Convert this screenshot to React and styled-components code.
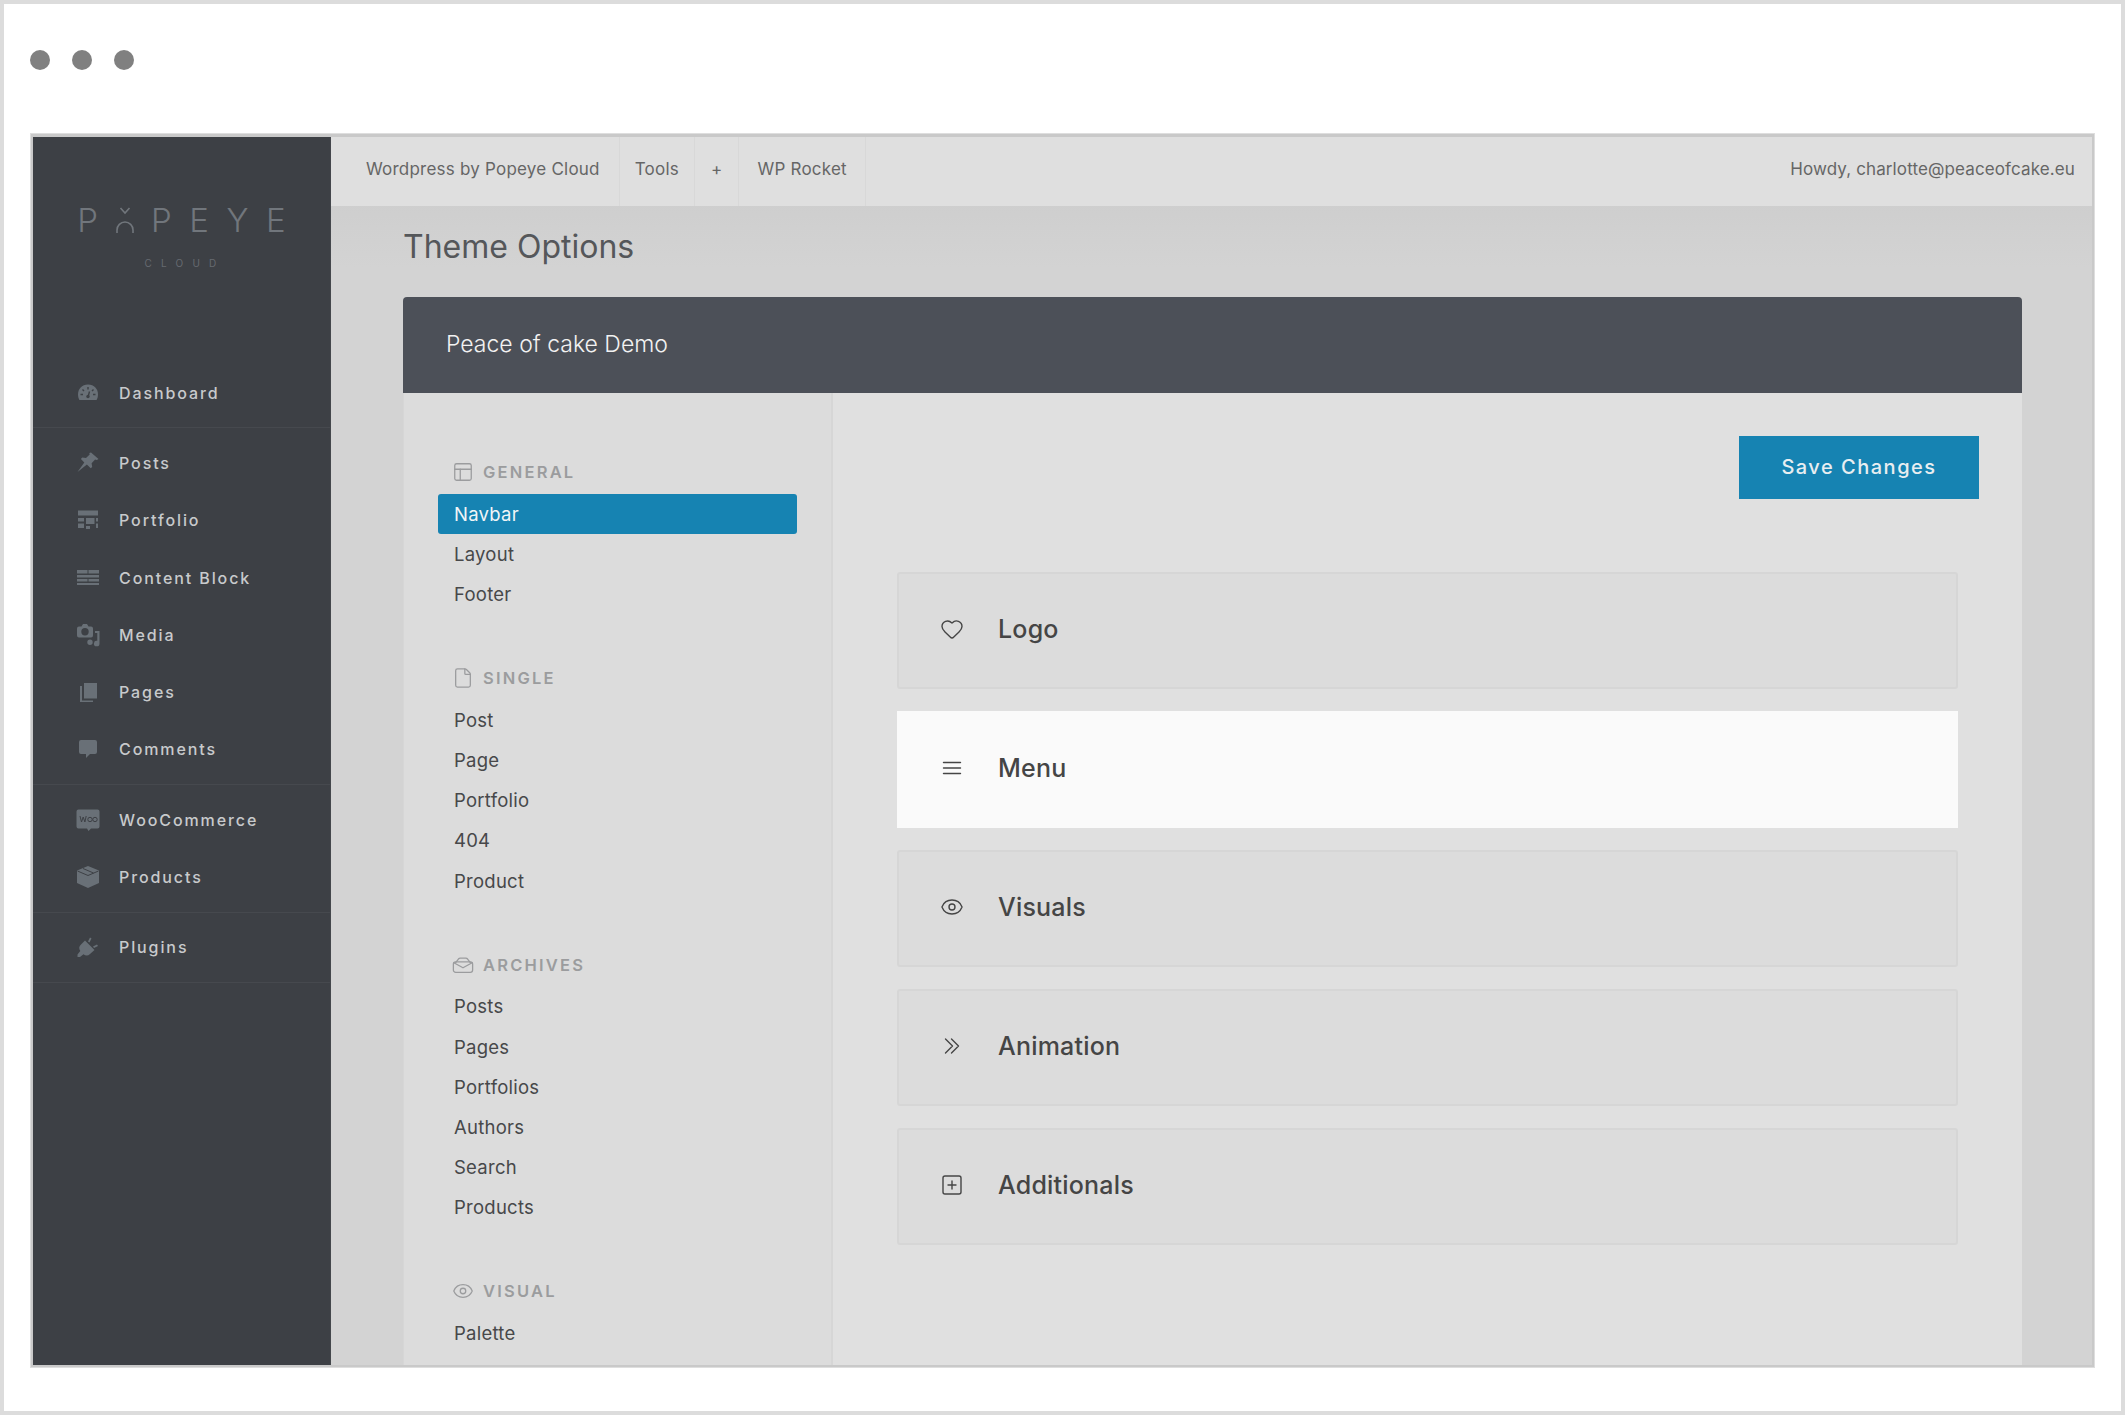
import { createGlobalStyle } from 'styled-components'
import styled from 'styled-components'
import { Heart, Eye, SquarePlus, PanelsTopLeft, File } from 'lucide-react'

const GlobalStyle = createGlobalStyle`
  * { box-sizing: border-box; }
  html, body { margin: 0; padding: 0; background: #fff; }
  body { font-family: Inter, "Open Sans", sans-serif; -webkit-font-smoothing: antialiased; }
`

const Frame = styled.div`
  width: 2125px;
  height: 1415px;
  border: 4px solid #dcdcdc;
  background: #fff;
  overflow: hidden;
`
const Dots = styled.div`
  display: flex;
  gap: 22px;
  height: 130px;
  padding: 46px 0 0 26px;
`
const Dot = styled.span`
  width: 20px;
  height: 20px;
  border-radius: 50%;
  background: #808080;
`
const Window = styled.div`
  display: flex;
  width: 2063px;
  height: 1233px;
  margin-left: 27px;
  border: 2px solid #c9c9c9;
  border-top-width: 3px;
  box-shadow: 0 0 0 1px #dedede;
  overflow: hidden;
`
const Sidebar = styled.aside`
  flex: 0 0 298px;
  background: #3d4045;
  border-right: 1px solid #44474c;
`
const Brand = styled.div`
  height: 221px;
  padding-top: 65px;
  display: flex;
  flex-direction: column;
  align-items: center;
`
const BrandName = styled.div`
  display: flex;
  align-items: center;
  gap: 17.5px;
  height: 36px;
  font-size: 33px;
  font-weight: 300;
  line-height: 36px;
  color: #71767c;
`
const BrandSub = styled.div`
  margin-top: 19px;
  font-size: 10px;
  line-height: 12px;
  letter-spacing: 9.2px;
  color: #666a70;
  margin-left: 7px;
`
const NavGroup = styled.div`
  padding: 6px 0;
  border-bottom: 1px solid #46494e;
`
const NavItem = styled.div`
  display: flex;
  align-items: center;
  height: 57.3px;
  padding-left: 43px;
  font-size: 16px;
  font-weight: 500;
  letter-spacing: 1.9px;
  color: #c8cacc;
`
const NavIcon = styled.svg`
  flex: 0 0 24px;
  width: 24px;
  height: 24px;
  margin-right: 19px;
  color: #697077;
  fill: currentColor;
`
const Right = styled.div`
  flex: 1;
  display: flex;
  flex-direction: column;
  min-width: 0;
  background: linear-gradient(#c9c9c9 0, #d3d3d3 130px, #d3d3d3 100%);
`
const Topbar = styled.header`
  display: flex;
  align-items: stretch;
  flex: 0 0 69px;
  background: #dfdfdf;
  font-size: 17px;
  letter-spacing: 0.22px;
  color: #666;
`
const TopItem = styled.div`
  display: flex;
  align-items: center;
  padding: 0 ${(p) => p.$pad || 15}px 6px ${(p) => p.$first ? 35 : p.$pad || 15}px;
  border-right: 1px solid #d8d8d8;
`
const Howdy = styled.div`
  margin-left: auto;
  display: flex;
  align-items: center;
  padding: 0 17px 6px 0;
  letter-spacing: 0.12px;
`
const Content = styled.main`
  flex: 1;
  display: flex;
  flex-direction: column;
  min-height: 0;
  padding: 0 70px 0 72px;
`
const Title = styled.h1`
  flex: 0 0 91px;
  margin: 0;
  display: flex;
  align-items: center;
  padding-bottom: 10px;
  font-size: 32px;
  font-weight: 400;
  color: #55575a;
`
const PanelHead = styled.div`
  flex: 0 0 96px;
  display: flex;
  align-items: center;
  padding: 0 0 3px 43px;
  border-radius: 4px 4px 0 0;
  background: #4c5058;
  font-size: 23px;
  font-weight: 300;
  color: #f2f2f2;
`
const PanelBody = styled.div`
  flex: 1;
  display: flex;
  min-height: 0;
  background: #e0e0e0;
`
const SideNav = styled.nav`
  flex: 0 0 430px;
  padding: 58px 0 0 34px;
  background: #dcdcdc;
  border-left: 1px solid #d6d6d6;
  border-right: 2px solid #d6d6d6;
  overflow: hidden;
`
const Section = styled.section`
  margin-bottom: 43.2px;
`
const Heading = styled.div`
  display: flex;
  align-items: center;
  height: 42.5px;
  padding: 0 0 1px 14px;
  font-size: 16.5px;
  font-weight: 600;
  letter-spacing: 2.2px;
  color: #9b9c9e;
  svg { width: 22px; height: 22px; margin-right: 9px; stroke-width: 1.4; }
`
const SideLink = styled.div`
  display: flex;
  align-items: center;
  width: 359px;
  height: 40.2px;
  padding-left: 16px;
  border-radius: 3px;
  font-size: 18.5px;
  letter-spacing: 0.25px;
  color: ${(p) => (p.$active ? '#f1f5f7' : '#47484a')};
  background: ${(p) => (p.$active ? '#1683b2' : 'transparent')};
`
const Main = styled.div`
  flex: 1;
  padding: 43px 43px 0;
`
const Toolbar = styled.div`
  display: flex;
  justify-content: flex-end;
  margin-bottom: 72.5px;
`
const SaveButton = styled.button`
  width: 240px;
  height: 63px;
  border: 0;
  padding: 0 0 2px;
  background: #1683b2;
  font-family: inherit;
  font-size: 20px;
  font-weight: 500;
  letter-spacing: 1.5px;
  color: #e8eef1;
`
const Cards = styled.div`
  display: flex;
  flex-direction: column;
  gap: 22px;
  margin: 0 21px;
`
const Card = styled.div`
  display: flex;
  align-items: center;
  height: 117px;
  padding: 0 0 3px 41px;
  border: 2px solid ${(p) => (p.$active ? '#fafafa' : '#d6d6d6')};
  border-radius: ${(p) => (p.$active ? 0 : 3)}px;
  background: ${(p) => (p.$active ? '#fafafa' : '#dcdcdc')};
  font-size: 25px;
  font-weight: 500;
  letter-spacing: 0.2px;
  color: #454545;
`
const CardIcon = styled.span`
  display: flex;
  justify-content: center;
  width: 24px;
  margin-right: 34px;
  svg { width: 24px; height: 24px; stroke-width: 1.4; fill: none; stroke: currentColor; stroke-linecap: round; stroke-linejoin: round; }
`

const Gauge = () => (
  <NavIcon viewBox="0 0 24 24">
    <path d="M12 3.500C5.800 3.500 2 8 2 13.500c0 2.200.6 4 1.400 5.500h17.200c.8-1.500 1.400-3.300 1.400-5.500C22 8 18.200 3.500 12 3.500z" />
    <path d="M12 6v2.500M6.500 8.500 8 10M4.500 13.500h2.500M17.500 8.500 16 10M19.500 13.500H17M13.500 10.500l-1.200 4.500" stroke="#3d4045" strokeWidth="1.4" fill="none" />
    <circle cx="12" cy="15.500" r="1.700" fill="#3d4045" />
  </NavIcon>
)
const Pin = () => (
  <NavIcon viewBox="0 0 24 24">
    <path d="m15 1.500 7.500 6.500-1.700 1-1.700-.6-3.500 3.800.6 3.800-1.500 1.300-3.800-3.800L1.500 21l6.800-9.500-3.400-3.400L6.200 6.600l3.800.5 3.700-3.500-.4-1.700z" />
  </NavIcon>
)
const Grid = () => (
  <NavIcon viewBox="0 0 24 24">
    <path d="M2 2.500h20v5H2zM2 10h6v3.500H2zM10 10h8.500v6H10zM20 10h2v3.500h-2zM2 15.500h6v4.500H2zM10 18h4v3h-4zM20 15.500h2v4.500h-2z" />
  </NavIcon>
)
const Blocks = () => (
  <NavIcon viewBox="0 0 24 24">
    <path d="M1 4h10.500v3.500H1zM12.500 4H23v3.500H12.500zM1 9h22v2.500H1zM1 13h10.500v2.500H1zM12.500 13H23v2.500H12.500zM1 17h22v2H1z" />
  </NavIcon>
)
const Media = () => (
  <NavIcon viewBox="0 0 24 24">
    <path fillRule="evenodd" d="M3 3.500h2.500L7 1h4l1.500 2.500H15a2 2 0 0 1 2 2v7a2 2 0 0 1-2 2H3a2 2 0 0 1-2-2v-7a2 2 0 0 1 2-2zm6 1.500a3.700 3.700 0 1 0 0 7.400A3.700 3.700 0 0 0 9 5z" />
    <path d="M19 8h4.500v12.500a2.800 2.800 0 1 1-2.200-2.700V10H19zM14 16.500a2.700 2.700 0 0 1 2.700 2.700 2.700 2.700 0 1 1-5.400 0 2.700 2.700 0 0 1 2.700-2.700z" />
  </NavIcon>
)
const Pages = () => (
  <NavIcon viewBox="0 0 24 24">
    <path d="M8 3h13v15.500H8z" />
    <path d="M6 6v14.500h11V22H4V6z" />
  </NavIcon>
)
const Comment = () => (
  <NavIcon viewBox="0 0 24 24">
    <path d="M5 3h14a2 2 0 0 1 2 2v10a2 2 0 0 1-2 2h-5l-4 4v-4H5a2 2 0 0 1-2-2V5a2 2 0 0 1 2-2z" />
  </NavIcon>
)
const Woo = () => (
  <NavIcon viewBox="0 0 24 24">
    <path d="M2.500 1.500h19a2 2 0 0 1 2 2v15a2 2 0 0 1-2 2H15L12.500 23 11 20.500H2.500a2 2 0 0 1-2-2v-15a2 2 0 0 1 2-2z" />
    <path d="M4 8l1.500 6 1.700-5 1.700 5 1.300-6" fill="none" stroke="#3d4045" strokeWidth="1" />
    <circle cx="14" cy="11.500" r="2.200" fill="none" stroke="#3d4045" strokeWidth="1" />
    <circle cx="19" cy="11.500" r="2.200" fill="none" stroke="#3d4045" strokeWidth="1" />
  </NavIcon>
)
const Box = () => (
  <NavIcon viewBox="0 0 24 24">
    <path d="M12 1 23 5.500v12.500L12 23 1 18V5.500z" />
    <path d="M1.500 6 12 10.500 22.500 6M7 3.500l10.500 4.500" fill="none" stroke="#3d4045" strokeWidth="1" />
  </NavIcon>
)
const Plug = () => (
  <NavIcon viewBox="0 0 24 24">
    <path d="M9 5.500 18.500 15 14 19a5 5 0 0 1-6.500.3L4 22H1.500v-2.500l2.800-3.500A5 5 0 0 1 5 9.500z" />
    <path d="M12 6.500 14 2.500l1.500 1L13.500 7.500zM17 11.500l4-2 1 1.500-4 2z" />
  </NavIcon>
)
const Tray = () => (
  <svg viewBox="0 0 24 24" fill="none" stroke="currentColor" strokeLinejoin="round" strokeLinecap="round">
    <path d="M4 9.500 7 5.500a3 3 0 0 1 2-1h6a3 3 0 0 1 2 1l3 4" />
    <rect x="1.500" y="8.500" width="21" height="11.500" rx="2.500" />
    <path d="M2 9.500 12 15l10-5.500" />
  </svg>
)
const Burger = () => (
  <svg viewBox="0 0 24 24">
    <path d="M3.500 6.500h17M3.500 12h17M3.500 17.500h17" />
  </svg>
)
const Chevrons = () => (
  <svg viewBox="0 0 24 24">
    <path d="M5.500 5l7 7-7 7M11.500 5l7 7-7 7" />
  </svg>
)
const BrandO = () => (
  <svg width="18" height="26" viewBox="0 0 18 26" fill="none" stroke="#71767c" strokeWidth="1.6">
    <path d="M1 26v-3a8 8 0 0 1 16 0v3" />
    <path d="M4.500 1 9 6l4.500-5" />
  </svg>
)

const navGroups = [
  [['Dashboard', Gauge]],
  [['Posts', Pin], ['Portfolio', Grid], ['Content Block', Blocks], ['Media', Media], ['Pages', Pages], ['Comments', Comment]],
  [['WooCommerce', Woo], ['Products', Box]],
  [['Plugins', Plug]],
]

const sections = [
  { title: 'GENERAL', icon: <PanelsTopLeft />, links: ['Navbar', 'Layout', 'Footer'] },
  { title: 'SINGLE', icon: <File />, links: ['Post', 'Page', 'Portfolio', '404', 'Product'] },
  { title: 'ARCHIVES', icon: <Tray />, links: ['Posts', 'Pages', 'Portfolios', 'Authors', 'Search', 'Products'] },
  { title: 'VISUAL', icon: <Eye />, links: ['Palette'] },
]

const cards = [
  { name: 'Logo', icon: <Heart /> },
  { name: 'Menu', icon: <Burger />, active: true },
  { name: 'Visuals', icon: <Eye /> },
  { name: 'Animation', icon: <Chevrons /> },
  { name: 'Additionals', icon: <SquarePlus /> },
]

export default function App() {
  return (
    <Frame>
      <GlobalStyle />
      <Dots>
        <Dot />
        <Dot />
        <Dot />
      </Dots>
      <Window>
        <Sidebar>
          <Brand>
            <BrandName>
              <span>P</span>
              <BrandO />
              <span>P</span>
              <span>E</span>
              <span>Y</span>
              <span>E</span>
            </BrandName>
            <BrandSub>CLOUD</BrandSub>
          </Brand>
          {navGroups.map((group, i) => (
            <NavGroup key={i}>
              {group.map(([label, Icon]) => (
                <NavItem key={label}>
                  <Icon />
                  {label}
                </NavItem>
              ))}
            </NavGroup>
          ))}
        </Sidebar>
        <Right>
          <Topbar>
            <TopItem $first $pad={19}>Wordpress by Popeye Cloud</TopItem>
            <TopItem>Tools</TopItem>
            <TopItem $pad={16}>+</TopItem>
            <TopItem $pad={18}>WP Rocket</TopItem>
            <Howdy>Howdy, charlotte@peaceofcake.eu</Howdy>
          </Topbar>
          <Content>
            <Title>Theme Options</Title>
            <PanelHead>Peace of cake Demo</PanelHead>
            <PanelBody>
              <SideNav>
                {sections.map((s) => (
                  <Section key={s.title}>
                    <Heading>
                      {s.icon}
                      {s.title}
                    </Heading>
                    {s.links.map((l) => (
                      <SideLink key={l} $active={l === 'Navbar'}>{l}</SideLink>
                    ))}
                  </Section>
                ))}
              </SideNav>
              <Main>
                <Toolbar>
                  <SaveButton>Save Changes</SaveButton>
                </Toolbar>
                <Cards>
                  {cards.map((c) => (
                    <Card key={c.name} $active={c.active}>
                      <CardIcon>{c.icon}</CardIcon>
                      {c.name}
                    </Card>
                  ))}
                </Cards>
              </Main>
            </PanelBody>
          </Content>
        </Right>
      </Window>
    </Frame>
  )
}
